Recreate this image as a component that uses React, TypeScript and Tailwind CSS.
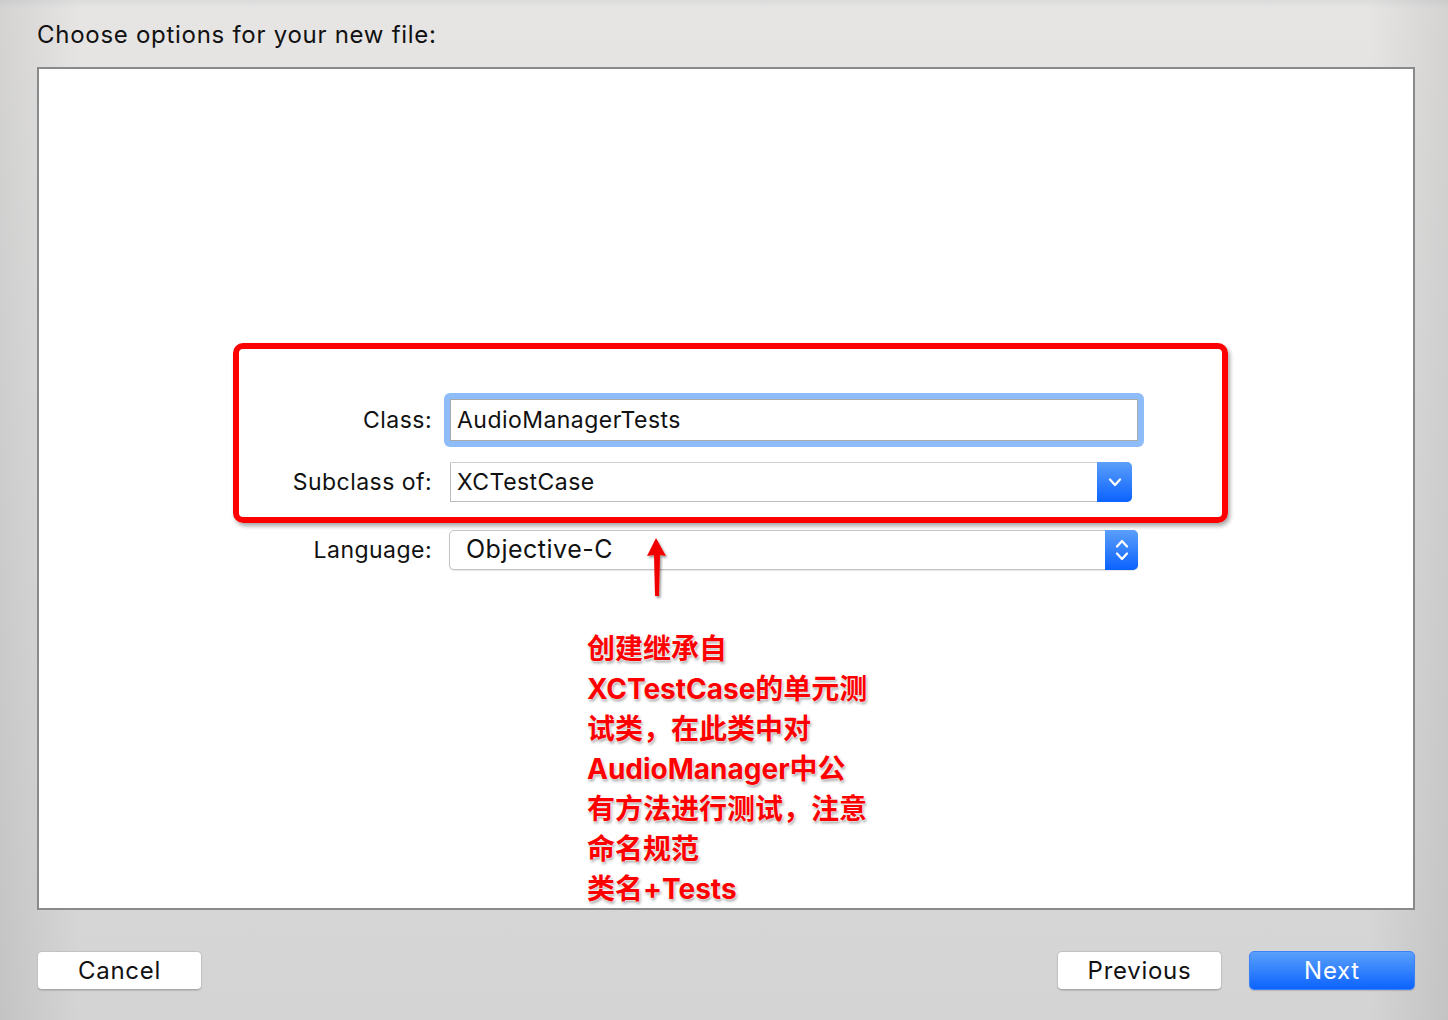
import React from 'react';

const sys = { fontFamily: 'Inter, "Noto Sans CJK SC", sans-serif' };

const Chevron = ({ up }: { up?: boolean }) => (
  <svg width="14" height="9" viewBox="0 0 14 9" fill="none">
    <path d={up ? 'M2 7.5 L7 2 L12 7.5' : 'M2 1.5 L7 7 L12 1.5'} stroke="white" strokeWidth="2.2" strokeLinecap="round" strokeLinejoin="round" />
  </svg>
);

const FormRow = ({ label, className, children }: { label: string; className?: string; children: React.ReactNode }) => (
  <div className={`flex items-center ${className || ''}`}>
    <div className="w-[393px] text-right text-[23px] tracking-[0.02em] text-[#111]">{label}</div>
    {children}
  </div>
);

const notes = [
  '创建继承自',
  'XCTestCase的单元测',
  '试类，在此类中对',
  'AudioManager中公',
  '有方法进行测试，注意',
  '命名规范',
  '类名+Tests',
];

export default function App() {
  return (
    <div
      className="w-[1448px] h-[1020px] flex flex-col bg-[linear-gradient(180deg,#dcdcdc_0px,#e6e5e4_8px,#dddddd_500px,#d4d4d4_1020px)] relative overflow-hidden"
      style={sys}
    >
      <div className="absolute inset-0 pointer-events-none bg-[linear-gradient(90deg,rgba(0,0,0,0.08)_0px,rgba(0,0,0,0)_80px,rgba(0,0,0,0)_1368px,rgba(0,0,0,0.08)_1448px)]" />

      <div className="relative px-[37px] pt-[18px] h-[67px] text-[24px] tracking-[0.03em] text-[#111] leading-[34px]">
        Choose options for your new file:
      </div>

      <div className="relative ml-[37px] mr-[33px] h-[843px] bg-white border-2 border-[#8a8a8a] flex flex-col pt-[324px]">
        {/* red annotation box */}
        <div className="absolute left-[194px] top-[274px] w-[995px] h-[180px] border-[6px] border-[#ff0000] rounded-[10px] shadow-[2px_3px_4px_rgba(0,0,0,0.35)] pointer-events-none" />

        {/* arrow */}
        <svg className="absolute left-[603px] top-[467px]" width="30" height="64" viewBox="0 0 30 64">
          <defs>
            <filter id="sh" x="-50%" y="-20%" width="200%" height="140%">
              <feDropShadow dx="1.5" dy="2" stdDeviation="1.2" floodColor="#000" floodOpacity="0.4" />
            </filter>
          </defs>
          <path d="M14 2 L24 20 L18 19 L17 60 L13 60 L12 19 L5 20 Z" fill="#f20000" filter="url(#sh)" />
        </svg>

        <FormRow label="Class:" className="h-[54px]">
          <div className="ml-[12px] w-[700px] h-[54px] rounded-[6px] bg-[#8ebcf8] p-[6px]">
            <div className="h-full bg-white border border-[#a9a9a9] flex items-center pl-[6px] text-[23px] tracking-[0.02em] text-[#111]">
              AudioManagerTests
            </div>
          </div>
        </FormRow>

        <FormRow label="Subclass of:" className="h-[40px] mt-[15px]">
          <div className="ml-[18px] w-[682px] h-[40px] flex border border-[#bdbdbd] border-t-[#d0d0d0] rounded-r-[5px] bg-white">
            <div className="flex-1 flex items-center pl-[6px] text-[23px] tracking-[0.02em] text-[#111]">XCTestCase</div>
            <div className="w-[35px] -my-px -mr-px rounded-r-[5px] bg-[linear-gradient(180deg,#5b9ff9,#0b62ff)] flex items-center justify-center">
              <Chevron />
            </div>
          </div>
        </FormRow>

        <FormRow label="Language:" className="h-[40px] mt-[28px]">
          <div className="ml-[17px] w-[689px] h-[40px] flex border border-[#c4c4c4] rounded-[5px] bg-white shadow-[0_1px_1px_rgba(0,0,0,0.1)]">
            <div className="flex-1 flex items-center pl-[16px] text-[25px] tracking-[0.02em] text-[#111]">Objective-C</div>
            <div className="w-[33px] -my-px -mr-px rounded-r-[5px] bg-[linear-gradient(180deg,#5b9ff9,#0b62ff)] flex flex-col items-center justify-center gap-[4px]">
              <Chevron up />
              <Chevron />
            </div>
          </div>
        </FormRow>

        <div className="mt-[59px] pl-[548px] text-[28px] leading-[40px] font-bold text-[#ff0000] [text-shadow:0_0_2px_#fff,0_0_3px_#fff,1px_2px_3px_rgba(0,0,0,0.45)]">
          {notes.map((n) => (
            <div key={n}>{n}</div>
          ))}
        </div>
      </div>

      <div className="relative flex items-center ml-[37px] mr-[33px] mt-[41px]">
        <button className="w-[165px] h-[39px] bg-white rounded-[5px] border border-[#c2c2c2] border-b-[#a8a8a8] shadow-[0_1px_1px_rgba(0,0,0,0.12)] text-[24px] tracking-[0.03em] text-[#111]">
          Cancel
        </button>
        <div className="flex-1" />
        <button className="w-[165px] h-[39px] bg-white rounded-[5px] border border-[#c2c2c2] border-b-[#a8a8a8] shadow-[0_1px_1px_rgba(0,0,0,0.12)] text-[24px] tracking-[0.03em] text-[#111]">
          Previous
        </button>
        <button className="ml-[27px] w-[166px] h-[39px] rounded-[5px] bg-[linear-gradient(180deg,#5aa0fb,#0c63ff)] border border-[#3b82f6] text-[24px] tracking-[0.03em] text-white shadow-[0_1px_1px_rgba(0,0,0,0.15)]">
          Next
        </button>
      </div>
    </div>
  );
}
